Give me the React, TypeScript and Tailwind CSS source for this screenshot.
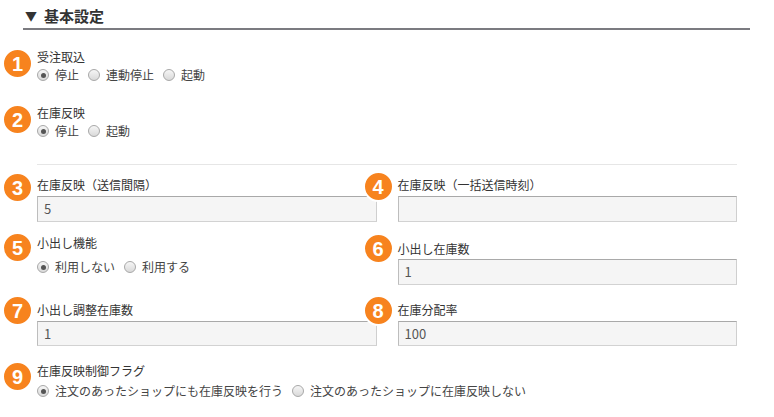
import type { ReactNode } from "react";

const font = { fontFamily: '"Noto Sans CJK JP", "Noto Sans", sans-serif' };

const Badge = ({ n, top }: { n: number; top: string }) => (
  <span
    className={`absolute left-[-35px] ${top} flex h-[31px] w-[31px] items-center justify-center rounded-full border-2 border-white bg-[#f7831e] text-[20px] font-bold leading-none text-white`}
    style={{ fontFamily: '"Liberation Sans", Arial, sans-serif' }}
  >
    {n}
  </span>
);

const Radio = ({ label, checked }: { label: string; checked?: boolean }) => (
  <label className="flex items-center gap-[6px] text-[12px] leading-[16px] text-[#444]">
    <span className="flex h-[12px] w-[12px] items-center justify-center rounded-full border border-[#a8a8a8] bg-gradient-to-b from-[#f6f6f6] to-[#d9d9d9]">
      {checked && <span className="h-[5px] w-[5px] rounded-full bg-[#555]" />}
    </span>
    {label}
  </label>
);

const Label = ({ children }: { children: ReactNode }) => (
  <div className="text-[12px] leading-[16px] text-[#333]">{children}</div>
);

const Input = ({ value, h }: { value: string; h: string }) => (
  <div
    className={`flex ${h} items-center border border-t-[#a9a9a9] border-l-[#bdbdbd] border-r-[#cfcfcf] border-b-[#d2d2d2] bg-[#f5f5f5] pl-[6px] text-[13px] text-[#555]`}
  >
    {value}
  </div>
);

export default function App() {
  return (
    <div className="h-[417px] w-[774px] overflow-hidden bg-white" style={font}>
      <div className="ml-[23px] w-[727px] border-b-2 border-[#7b7b80] pt-[6px] pb-[2px]">
        <h2 className="flex items-center gap-[7px] pl-[2px] text-[15px] font-bold leading-[20px] text-[#333]">
          <span className="text-[12px]">▼</span>
          基本設定
        </h2>
      </div>

      <div className="ml-[37px] w-[700px]">
        <div className="relative mt-[19px]">
          <Badge n={1} top="top-[-1px]" />
          <Label>受注取込</Label>
          <div className="mt-[2px] flex gap-[9px]">
            <Radio label="停止" checked />
            <Radio label="連動停止" />
            <Radio label="起動" />
          </div>
        </div>

        <div className="relative mt-[22px]">
          <Badge n={2} top="top-[-1px]" />
          <Label>在庫反映</Label>
          <div className="mt-[2px] flex gap-[9px]">
            <Radio label="停止" checked />
            <Radio label="起動" />
          </div>
        </div>

        <div className="mt-[25px] border-t border-[#e6e6e6]" />

        <div className="grid grid-cols-2 gap-x-[21px]">
          <div className="relative mt-[12px]">
            <Badge n={3} top="top-[-5px]" />
            <Label>在庫反映（送信間隔）</Label>
            <div className="mt-[3px]">
              <Input value="5" h="h-[26px]" />
            </div>
          </div>
          <div className="relative mt-[12px]">
            <Badge n={4} top="top-[-6px]" />
            <Label>在庫反映（一括送信時刻）</Label>
            <div className="mt-[3px]">
              <Input value="" h="h-[26px]" />
            </div>
          </div>

          <div className="relative mt-[13px]">
            <Badge n={5} top="top-[-3px]" />
            <Label>小出し機能</Label>
            <div className="mt-[8px] flex gap-[9px]">
              <Radio label="利用しない" checked />
              <Radio label="利用する" />
            </div>
          </div>
          <div className="relative mt-[19px]">
            <Badge n={6} top="top-[-8px]" />
            <Label>小出し在庫数</Label>
            <div className="mt-[2px]">
              <Input value="1" h="h-[26px]" />
            </div>
          </div>

          <div className="relative mt-[17px]">
            <Badge n={7} top="top-[-7px]" />
            <Label>小出し調整在庫数</Label>
            <div className="mt-[3px]">
              <Input value="1" h="h-[25px]" />
            </div>
          </div>
          <div className="relative mt-[17px]">
            <Badge n={8} top="top-[-7px]" />
            <Label>在庫分配率</Label>
            <div className="mt-[3px]">
              <Input value="100" h="h-[25px]" />
            </div>
          </div>
        </div>

        <div className="relative mt-[17px]">
          <Badge n={9} top="top-[-2px]" />
          <Label>在庫反映制御フラグ</Label>
          <div className="mt-[4px] flex gap-[9px]">
            <Radio label="注文のあったショップにも在庫反映を行う" checked />
            <Radio label="注文のあったショップに在庫反映しない" />
          </div>
        </div>
      </div>
    </div>
  );
}
